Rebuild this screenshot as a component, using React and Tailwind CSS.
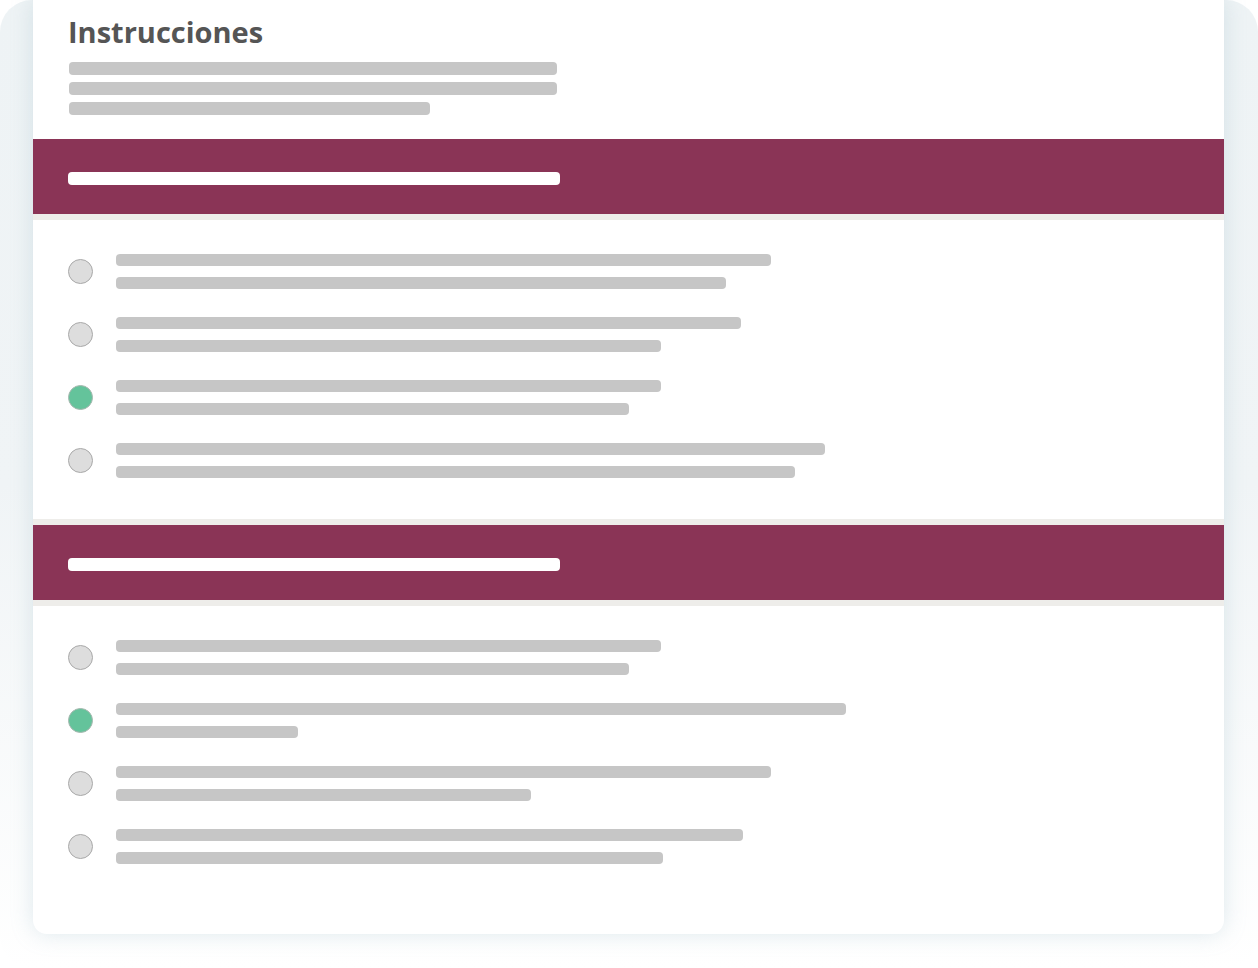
import React from 'react';

const sections = [
  {
    rows: [
      { a: 655, b: 610, done: false },
      { a: 625, b: 545, done: false },
      { a: 545, b: 513, done: true },
      { a: 709, b: 679, done: false },
    ],
  },
  {
    rows: [
      { a: 545, b: 513, done: false },
      { a: 730, b: 182, done: true },
      { a: 655, b: 415, done: false },
      { a: 627, b: 547, done: false },
    ],
  },
];

function Bar({ width, className = 'bg-[#c6c6c6] h-[12px]' }) {
  return <div className={`rounded-[4px] ${className}`} style={{ width }} />;
}

function Radio({ done }) {
  return (
    <div
      className={
        done
          ? 'w-[25px] h-[25px] shrink-0 rounded-full bg-[#64c39b] border border-[#a8b8b0]'
          : 'w-[25px] h-[25px] shrink-0 rounded-full bg-[#dddddd] border border-[#a9a9a9]'
      }
    />
  );
}

function Section({ rows, first, last }) {
  return (
    <div>
      {!first && <div className="h-[6px] bg-[#eeedea]" />}
      <div className="h-[75px] bg-[#8a3456] flex items-center pl-[35px] pt-[4px]">
        <Bar width={492} className="bg-white h-[13px]" />
      </div>
      <div className="h-[6px] bg-[#eeedea]" />
      <div className={last ? 'pt-[34px] pl-[35px] flex flex-col gap-[28px]' : 'pt-[34px] pb-[41px] pl-[35px] flex flex-col gap-[28px]'}>
        {rows.map((r, i) => (
          <div key={i} className="flex items-center gap-[23px]">
            <Radio done={r.done} />
            <div className="flex flex-col gap-[11px]">
              <Bar width={r.a} />
              <Bar width={r.b} />
            </div>
          </div>
        ))}
      </div>
    </div>
  );
}

export default function App() {
  return (
    <div className="w-[1258px] h-[968px] bg-white overflow-hidden">
      <div className="h-full rounded-[32px] bg-gradient-to-b from-[#eef3f5] via-[#f0f4f6] to-white pl-[33px] pr-[34px]">
        <div className="bg-white rounded-b-[14px] shadow-[0_0_22px_rgba(140,175,190,0.28)] h-[934px]">
          <div className="pl-[35px] pt-[14px] pb-[24px]">
            <h1
              className="text-[29px] font-bold text-[#555555] leading-[36px] mb-[12px]"
              style={{ fontFamily: '"Open Sans", "Liberation Sans", sans-serif' }}
            >
              Instrucciones
            </h1>
            <div className="flex flex-col gap-[7px] pl-[1px]">
              <Bar width={488} className="bg-[#c6c6c6] h-[13px]" />
              <Bar width={488} className="bg-[#c6c6c6] h-[13px]" />
              <Bar width={361} className="bg-[#c6c6c6] h-[13px]" />
            </div>
          </div>
          {sections.map((s, i) => (
            <Section key={i} rows={s.rows} first={i === 0} last={i === sections.length - 1} />
          ))}
        </div>
      </div>
    </div>
  );
}
